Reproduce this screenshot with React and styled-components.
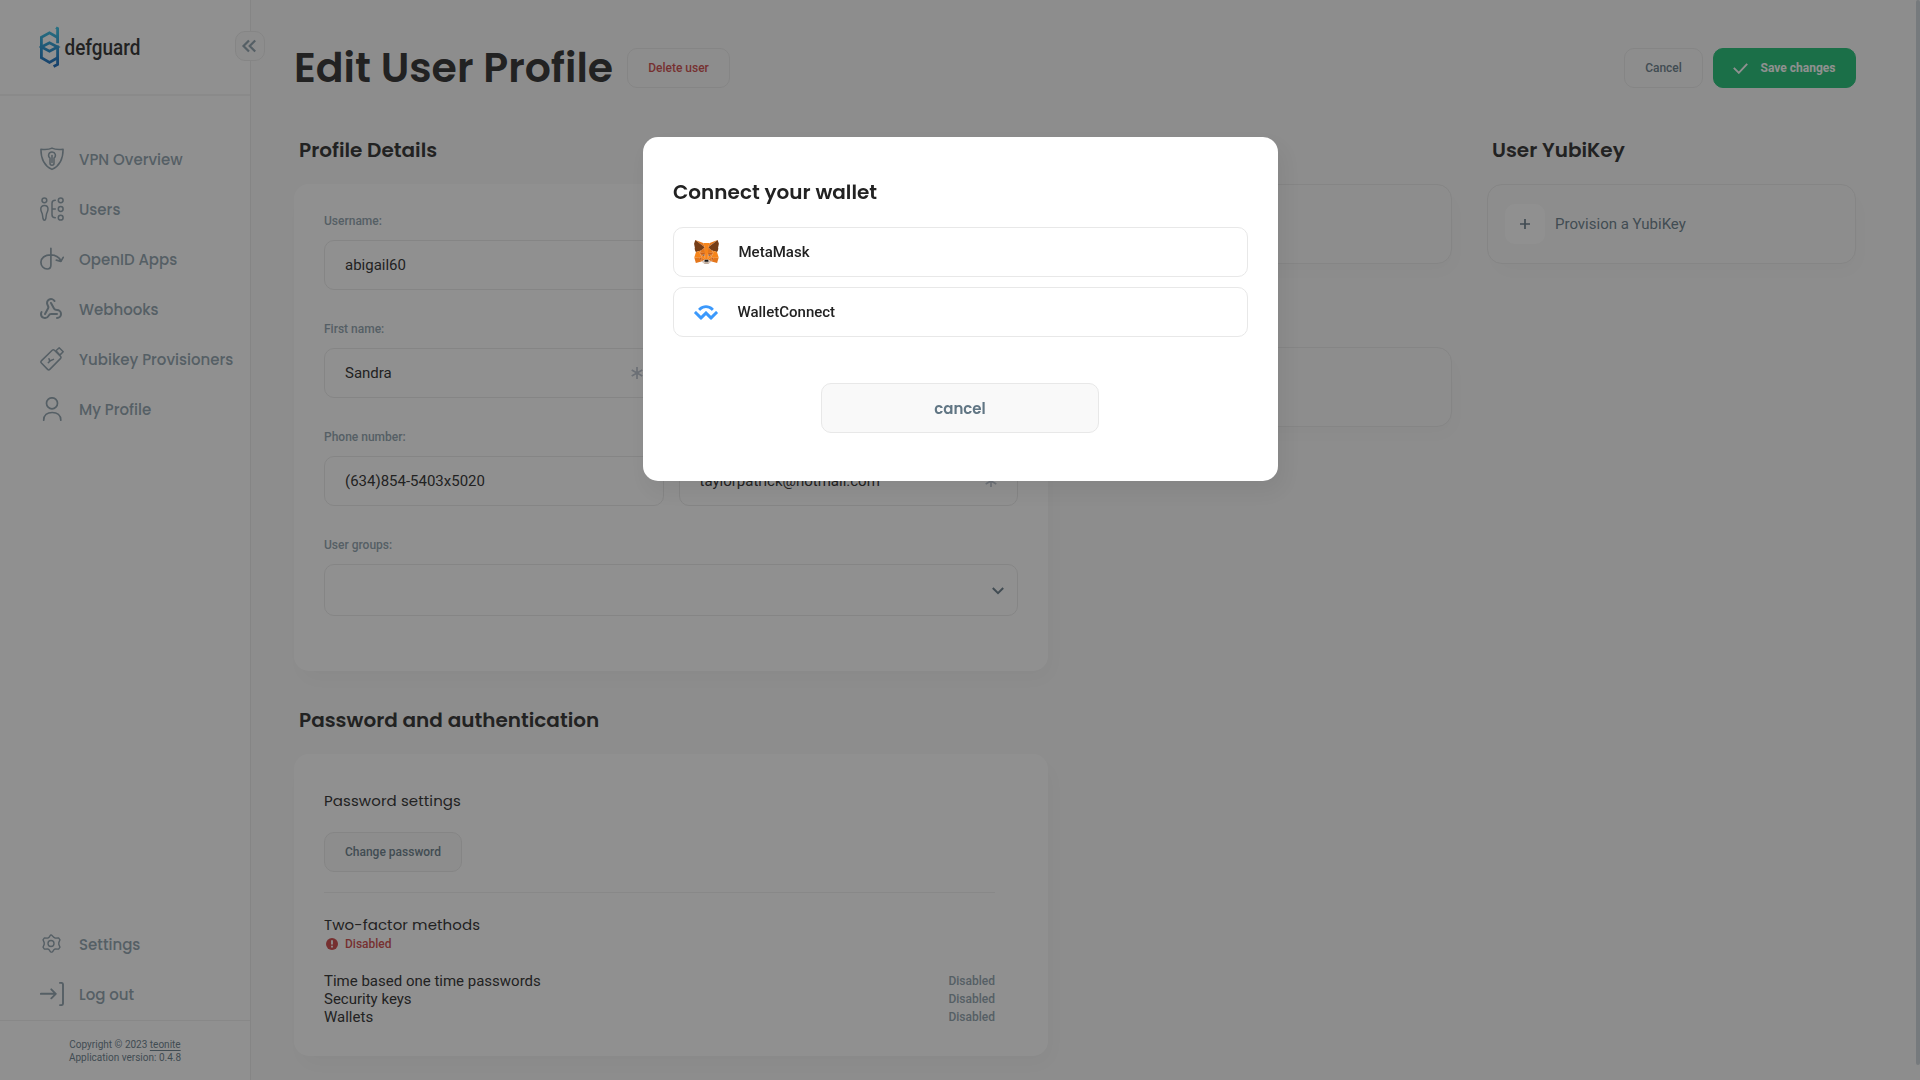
import React from 'react';
import styled, { createGlobalStyle, css } from 'styled-components';
import { Webhook } from 'lucide-react';

const heading = css`
  font-family: Poppins, Inter, sans-serif;
`;

const GlobalStyle = createGlobalStyle`
  *, *::before, *::after { box-sizing: border-box; }
  html, body, #root { margin: 0; padding: 0; }
  body {
    height: 1080px;
    overflow: hidden;
    background: #f9f9f9;
    color: #222;
    font-family: Roboto, sans-serif;
    font-size: 15px;
  }
  button { font-family: inherit; margin: 0; cursor: pointer; }
  svg { display: block; flex: none; }
`;

const Page = styled.div`
  display: flex;
  width: 1920px;
  height: 1080px;
  overflow: hidden;
`;

const Sidebar = styled.aside`
  display: flex;
  flex-direction: column;
  flex: none;
  width: 251px;
  height: 1080px;
  background: #fff;
  border-right: 1px solid #e8e8e8;
  position: relative;
`;

const Brand = styled.div`
  height: 96px;
  padding: 26px 0 0 39px;
  border-bottom: 2px solid #f2f2f2;
`;

const Collapse = styled.button`
  position: absolute;
  top: 31px;
  left: 235px;
  display: grid;
  place-items: center;
  width: 30px;
  height: 30px;
  padding: 0 2px 0 0;
  background: #f9f9f9;
  border: 1px solid #e8e8e8;
  border-radius: 10px;
`;

const Nav = styled.nav`
  display: flex;
  flex-direction: column;
  padding-top: ${(p) => p.$top || 0}px;
  padding-bottom: ${(p) => p.$bottom || 0}px;
`;

const Spacer = styled.div`
  flex: 1;
`;

const NavItem = styled.a`
  ${heading}
  display: flex;
  align-items: center;
  gap: 15px;
  height: 50px;
  padding-left: 40px;
  color: #899ca8;
  font-size: 15px;
  font-weight: 500;
  white-space: nowrap;
`;

const Footer = styled.footer`
  height: 60px;
  padding-top: 17px;
  border-top: 1px solid #efefef;
  text-align: center;
  font-size: 10px;
  line-height: 13px;
  color: #617684;
  a { text-decoration: underline; text-underline-offset: 2px; }
`;

const Main = styled.main`
  flex: 1;
  min-width: 0;
  padding: 40px 64px 0 43px;
`;

const TopBar = styled.header`
  display: flex;
  align-items: center;
  height: 56px;
`;

const Title = styled.h1`
  ${heading}
  margin: 0;
  width: 333px;
  font-size: 41px;
  font-weight: 600;
  line-height: 56px;
  white-space: nowrap;
`;

const Actions = styled.div`
  display: flex;
  gap: 10px;
  margin-left: auto;
`;

const Button = styled.button`
  display: flex;
  align-items: center;
  justify-content: center;
  gap: 13px;
  height: 40px;
  width: ${(p) => p.$width}px;
  padding: 0;
  font-size: 12px;
  font-weight: 500;
  border-radius: 10px;
  border: 1px solid #e8e8e8;
  background: #f9f9f9;
  color: #617684;
  ${(p) => p.$tone === 'danger' && css`color: #cb3f3f;`}
  ${(p) => p.$tone === 'success' && css`
    color: #fff;
    background: #14bc6e;
    border-color: #14bc6e;
    font-weight: 700;
    padding-right: 1px;
  `}
`;

const Columns = styled.div`
  display: grid;
  grid-template-columns: 754px 369px 369px;
  gap: 35px;
  margin-top: 40px;
`;

const Column = styled.div`
  display: flex;
  flex-direction: column;
`;

const SectionTitle = styled.h2`
  ${heading}
  height: 48px;
  margin: ${(p) => p.$top || 0}px 0 0 5px;
  line-height: 28px;
  font-size: 20px;
  font-weight: 600;
`;

const Card = styled.section`
  height: ${(p) => p.$height}px;
  padding: 30px;
  background: #fff;
  border-radius: 15px;
  box-shadow: 5px 10px 20px rgba(0, 0, 0, 0.03);
`;

const AddCard = styled.section`
  display: flex;
  align-items: center;
  gap: 10px;
  height: 80px;
  padding-left: 17px;
  color: #617684;
  background: #f9f9f9;
  border: 1px solid #e8e8e8;
  border-radius: 15px;
  box-shadow: 5px 10px 20px rgba(0, 0, 0, 0.025);
`;

const PlusBox = styled.span`
  display: grid;
  place-items: center;
  width: 40px;
  height: 40px;
  background: #fff;
  border-radius: 10px;
`;

const Form = styled.div`
  display: grid;
  grid-template-columns: 1fr 1fr;
  column-gap: 15px;
  row-gap: 32px;
`;

const Field = styled.div`
  grid-column: ${(p) => (p.$wide ? '1 / -1' : 'auto')};
`;

const Label = styled.label`
  display: block;
  height: 26px;
  line-height: 14px;
  font-size: 12px;
  font-weight: 500;
  color: #899ca8;
`;

const Input = styled.div`
  display: flex;
  align-items: center;
  justify-content: space-between;
  height: ${(p) => (p.$tall ? 52 : 50)}px;
  padding: ${(p) => (p.$tall ? '2px 13px 0 20px' : '0 20px')};
  border: 1px solid #e8e8e8;
  border-radius: 10px;
`;

const SubTitle = styled.h3`
  ${heading}
  margin: 0;
  font-size: 15px;
  font-weight: 400;
  line-height: 22px;
  letter-spacing: 0.09px;
`;

const PasswordBlock = styled.div`
  display: flex;
  flex-direction: column;
  gap: 20px;
  width: 671px;
  padding: 6px 0 20px;
  border-bottom: 1px solid #efefef;
`;

const FactorHead = styled.div`
  margin-top: 21px;
`;

const Status = styled.div`
  display: flex;
  align-items: center;
  gap: 7px;
  padding-left: 2px;
  height: 16px;
  font-size: 12px;
  font-weight: 500;
  color: #cb3f3f;
`;

const Methods = styled.div`
  width: 671px;
  margin-top: 20px;
`;

const Method = styled.div`
  display: flex;
  align-items: center;
  justify-content: space-between;
  height: 18px;
  line-height: 18px;
  span:last-child { font-size: 12px; font-weight: 500; color: #899ca8; }
`;

const ScrollThumb = styled.div`
  position: absolute;
  top: 0;
  left: 1916px;
  width: 4px;
  height: 1065px;
  border-radius: 2px;
  background: #cbd3d8;
`;

const Backdrop = styled.div`
  position: fixed;
  inset: 0;
  display: flex;
  justify-content: center;
  align-items: flex-start;
  padding-top: 137px;
  background: rgba(34, 34, 34, 0.5);
`;

const Modal = styled.div`
  display: flex;
  flex-direction: column;
  width: 635px;
  height: 344px;
  padding: 41px 30px 0;
  margin-left: 1px;
  background: #fff;
  border-radius: 15px;
  box-shadow: 5px 10px 20px rgba(0, 0, 0, 0.06);
`;

const ModalTitle = styled.h2`
  ${heading}
  margin: 0 0 21px;
  font-size: 20px;
  font-weight: 600;
  line-height: 28px;
`;

const WalletList = styled.div`
  display: flex;
  flex-direction: column;
  gap: 10px;
`;

const WalletOption = styled.button`
  display: flex;
  align-items: center;
  gap: 19.5px;
  height: 50px;
  padding: 0 20px;
  border: 1px solid #e8e8e8;
  border-radius: 10px;
  background: #fff;
  color: #222;
  font-size: 15px;
  font-weight: 500;
`;

const ModalCancel = styled.button`
  ${heading}
  width: 278px;
  height: 50px;
  margin: 46px 0 0 148px;
  border: 1px solid #e8e8e8;
  border-radius: 10px;
  background: #f9f9f9;
  color: #617684;
  font-size: 15px;
  font-weight: 600;
`;

const Icon = ({ children, w = 1.5 }) => (
  <svg width="24" height="24" viewBox="0 0 24 24" fill="none" stroke="currentColor" strokeWidth={w} strokeLinecap="round" strokeLinejoin="round">
    {children}
  </svg>
);

const ShieldIcon = () => (
  <Icon>
    <path d="M12 1.1C9.2 2.5 5 2.7 .9 2.2c0 8.800 3.600 16.800 11.100 20.200C19.500 19 23.100 11 23.100 2.200 19 2.700 14.800 2.500 12 1.100z" />
    <path d="M12 5a3.300 3.300 0 0 0-2 6v5.300a2 2 0 0 0 4 0V11a3.300 3.300 0 0 0-2-6z" />
    <path d="M12 8.500v7" />
  </Icon>
);

const UsersIcon = () => (
  <Icon>
    <circle cx="4.400" cy="3.300" r="2.400" />
    <path d="M4.400 8.400C2 8.400.8 10 .8 12c0 2.200 1 3.400 1.500 5l.7 4.500c.2 1 .6 1.700 1.400 1.700s1.200-.7 1.400-1.700l.7-4.500C7 15.400 8 14.200 8 12c0-2-1.200-3.600-3.600-3.600z" />
    <path d="M15.300 3.300c-2.400 0-3.300.9-3.300 3v11.400c0 2.100.9 3 3.300 3M12 12h3.300" />
    <circle cx="20.700" cy="3.300" r="2.400" />
    <circle cx="20.700" cy="12" r="2.400" />
    <circle cx="20.700" cy="20.700" r="2.400" />
  </Icon>
);

const OpenIdIcon = () => (
  <Icon w={1.7}>
    <path d="M10.900 1.300V18c0 2.600-1.400 4-3.700 4C3.600 22 .9 19 .9 15.300c0-4.300 3.900-7.400 9.600-7.400 4.700 0 8.700 2.400 10.300 6" />
    <path d="M16.300 13.200l4.600 1.100 2.300-4" />
  </Icon>
);

const WebhookIcon = () => (
  <svg width="24" height="24" viewBox="0 0 24 24">
    <Webhook x="-1" y="0" width="24" height="24" strokeWidth={2} />
  </svg>
);

const YubikeyIcon = () => (
  <Icon>
    <path d="M1.300 13.900L12.200 3.300c.7-.7 1.500-.7 2.200 0l6 5.900c.8.800.8 1.600 0 2.400L9.800 22.400c-.7.700-1.500.700-2.200 0L1.400 16c-.7-.7-.7-1.400-.1-2.100z" />
    <path d="M16 3.800l3.200-3 4 3.900-3.400 3.400z" />
    <path d="M9 11.700l.7 2.300 3.800-1.600M8.300 15.600l1.900-1.600" />
  </Icon>
);

const ProfileIcon = () => (
  <Icon w={1.700}>
    <circle cx="12" cy="6.300" r="5.500" />
    <path d="M3.700 23.200c0-5 3.600-7.700 8.500-7.700s8.600 2.700 8.600 7.700" />
  </Icon>
);

const GearIcon = () => (
  <Icon w={1.400}>
    <path d="M11 3.100l-1.500 2.300-1.300.7-3.300-.2L3.500 7.800l1.200 2.800v1.800l-1.200 2.800 1.400 1.900 3.300-.2 1.300.7 1.500 2.300 1 .3 1-.3 1.500-2.300 1.300-.7 3.300.2 1.400-1.900-1.200-2.800v-1.800l1.200-2.800-1.400-1.900-3.300.2-1.300-.7L12 3.100 11.500 2.900z" transform="translate(-.5 0)" />
    <circle cx="11" cy="11.500" r="3" />
  </Icon>
);

const LogoutIcon = () => (
  <Icon w={1.900}>
    <path d="M.8 11.800h14.800M11.300 7.300l4.500 4.500-4.500 4.500M20 .9h1.300c1 0 1.700.6 1.700 1.700v18.800c0 1.100-.7 1.700-1.700 1.700H20" />
  </Icon>
);

const Asterisk = () => (
  <svg width="12" height="12" viewBox="0 0 12 12" stroke="#b8c0cc" strokeWidth="1.700">
    <path d="M6 0v12M.7 3l10.600 6M11.300 3L.7 9" />
  </svg>
);

const Plus = () => (
  <svg width="10" height="10" viewBox="0 0 10 10" stroke="#617684" strokeWidth="1.700">
    <path d="M5 0v10M0 5h10" />
  </svg>
);

const Logo = () => (
  <svg width="140" height="46" viewBox="0 0 140 46">
    <defs>
      <linearGradient id="mark" x1="0" y1="0" x2="0" y2="41" gradientUnits="userSpaceOnUse">
        <stop offset="0" stopColor="#2fc4e6" />
        <stop offset="1" stopColor="#0a5cb4" />
      </linearGradient>
    </defs>
    <g fill="none" stroke="url(#mark)" strokeWidth="2.800" strokeLinejoin="miter">
      <path d="M17 1.600L18.600 2.600V17.200" />
      <path d="M18.600 11.500L10.500 6.800 2.400 11.400V31.800L10.500 36.400 18.600 31.800" />
      <path d="M18.600 19.500V38.500L14.600 40.600" />
      <path d="M2.400 21L10.500 16.800 18.600 21 10.500 25.200z" />
    </g>
    <text x="25.500" y="28.500" fill="#222" fontFamily="Roboto, sans-serif" fontSize="22.500" fontWeight="500" textLength="76" lengthAdjust="spacingAndGlyphs">
      defguard
    </text>
  </svg>
);

const foxShapes = [
  ['#e2761b', '274.1,35.5 174.6,109.4 193,65.8'],
  ['#e4761b', '44.4,35.5 143.1,110.1 125.6,65.8'],
  ['#e4761b', '238.3,206.8 211.8,247.4 268.5,263 284.8,207.7'],
  ['#e4761b', '33.9,207.7 50.1,263 106.8,247.4 80.3,206.8'],
  ['#e4761b', '103.6,138.2 87.8,162.1 144.1,164.6 142.1,104.1'],
  ['#e4761b', '214.9,138.2 175.9,103.4 174.6,164.6 230.8,162.1'],
  ['#e4761b', '106.8,247.4 140.6,230.9 111.4,208.1'],
  ['#e4761b', '177.9,230.9 211.8,247.4 207.1,208.1'],
  ['#d7c1b3', '211.8,247.4 177.9,230.9 180.6,253 180.3,262.3'],
  ['#d7c1b3', '106.8,247.4 138.3,262.3 138.1,253 140.6,230.9'],
  ['#233447', '138.8,193.5 110.6,185.2 130.5,176.1'],
  ['#233447', '179.7,193.5 188,176.1 208,185.2'],
  ['#cd6116', '106.8,247.4 111.6,206.8 80.3,207.7'],
  ['#cd6116', '207,206.8 211.8,247.4 238.3,207.7'],
  ['#cd6116', '230.8,162.1 174.6,164.6 179.8,193.5 188.1,176.1 208.1,185.2'],
  ['#cd6116', '110.6,185.2 130.6,176.1 138.8,193.5 144.1,164.6 87.8,162.1'],
  ['#e4751f', '87.8,162.1 111.4,208.1 110.6,185.2'],
  ['#e4751f', '208.1,185.2 207.1,208.1 230.8,162.1'],
  ['#e4751f', '144.1,164.6 138.8,193.5 145.4,227.6 146.9,182.7'],
  ['#e4751f', '174.6,164.6 171.9,182.6 173.1,227.6 179.8,193.5'],
  ['#f6851b', '179.8,193.5 173.1,227.6 177.9,230.9 207.1,208.1 208.1,185.2'],
  ['#f6851b', '110.6,185.2 111.4,208.1 140.6,230.9 145.4,227.6 138.8,193.5'],
  ['#c0ad9e', '180.3,262.3 180.6,253 178.1,250.8 140.4,250.8 138.1,253 138.3,262.3 106.8,247.4 117.8,256.4 140.1,271.9 178.4,271.9 200.8,256.4 211.8,247.4'],
  ['#161616', '177.9,230.9 173.1,227.6 145.4,227.6 140.6,230.9 138.1,253 140.4,250.8 178.1,250.8 180.6,253'],
  ['#763d16', '278.3,114.2 286.8,73.4 274.1,35.5 177.9,106.9 214.9,138.2 267.2,153.5 278.8,140 273.8,136.4 281.8,129.1 275.6,124.3 283.6,118.2'],
  ['#763d16', '31.8,73.4 40.3,114.2 34.9,118.2 42.9,124.3 36.8,129.1 44.8,136.4 39.8,140 51.3,153.5 103.6,138.2 140.6,106.9 44.4,35.5'],
  ['#f6851b', '267.2,153.5 214.9,138.2 230.8,162.1 207.1,208.1 238.3,207.7 284.8,207.7'],
  ['#f6851b', '103.6,138.2 51.3,153.5 33.9,207.7 80.3,207.7 111.4,208.1 87.8,162.1'],
  ['#f6851b', '174.6,164.6 177.9,106.9 193.1,65.8 125.6,65.8 140.6,106.9 144.1,164.6 145.3,182.8 145.4,227.6 173.1,227.6 173.3,182.8'],
];

const MetaMaskIcon = () => (
  <svg width="25" height="24" viewBox="31 35 257 238" preserveAspectRatio="none">
    {foxShapes.map(([fill, points]) => (
      <polygon key={points} fill={fill} points={points} />
    ))}
  </svg>
);

const WalletConnectIcon = () => (
  <svg width="24" height="15" viewBox="0 0 300 185">
    <path
      fill="#3b99fc"
      d="M61.4385429,36.2562612 C110.349767,-11.6319051 189.65053,-11.6319051 238.561752,36.2562612 L244.448297,42.0196786 C246.893858,44.4140867 246.893858,48.2961898 244.448297,50.690599 L224.311602,70.406102 C223.088821,71.6033071 221.106302,71.6033071 219.883521,70.406102 L211.782937,62.4749541 C177.661245,29.0669724 122.339051,29.0669724 88.2173582,62.4749541 L79.542302,70.9685592 C78.3195204,72.1657633 76.337001,72.1657633 75.1142214,70.9685592 L54.9775265,51.2530561 C52.5319653,48.8586469 52.5319653,44.9765439 54.9775265,42.5821357 L61.4385429,36.2562612 Z M280.206339,77.0300061 L298.128036,94.5769031 C300.573585,96.9713 300.573599,100.85338 298.128067,103.247793 L217.317896,182.368927 C214.872352,184.763353 210.907314,184.76338 208.461736,182.368989 L151.107561,126.214385 C150.496171,125.615783 149.504911,125.615783 148.893521,126.214385 L91.5405888,182.368927 C89.0950587,184.763359 85.1300133,184.763399 82.6844276,182.369014 L1.87196327,103.246785 C-0.573596939,100.852377 -0.573596939,96.9702735 1.87196327,94.5758653 L19.7936929,77.028998 C22.2392531,74.6345898 26.2042918,74.6345898 28.6498531,77.028998 L86.0048306,133.184355 C86.6162214,133.782957 87.6074796,133.782957 88.2188704,133.184355 L145.571,77.028998 C148.016505,74.6345347 151.981544,74.6344449 154.427161,77.028798 L211.782164,133.184331 C212.393554,133.782932 213.384814,133.782932 213.996204,133.184331 L271.349179,77.0308961 C273.79474,74.6364878 277.759778,74.6364878 280.205339,77.0308961 Z"
    />
  </svg>
);

const navItems = [
  ['VPN Overview', <ShieldIcon />],
  ['Users', <UsersIcon />],
  ['OpenID Apps', <OpenIdIcon />],
  ['Webhooks', <WebhookIcon />],
  ['Yubikey Provisioners', <YubikeyIcon />],
  ['My Profile', <ProfileIcon />],
];

export default function App() {
  return (
    <>
      <GlobalStyle />
      <Page>
        <Sidebar>
          <Brand>
            <Logo />
          </Brand>
          <Collapse aria-label="Collapse">
            <svg width="16" height="14" viewBox="0 0 16 14" fill="none" stroke="#899ca8" strokeWidth="2.200">
              <path d="M8 1.500L2.500 7 8 12.500M14.200 1.500L8.700 7l5.500 5.500" />
            </svg>
          </Collapse>
          <Nav $top={38}>
            {navItems.map(([label, icon]) => (
              <NavItem key={label}>
                {icon}
                {label}
              </NavItem>
            ))}
          </Nav>
          <Spacer />
          <Nav $bottom={1}>
            <NavItem><GearIcon />Settings</NavItem>
            <NavItem><LogoutIcon />Log out</NavItem>
          </Nav>
          <Footer>
            <div>Copyright © 2023 <a>teonite</a></div>
            <div>Application version: 0.4.8</div>
          </Footer>
        </Sidebar>

        <Main>
          <TopBar>
            <Title>Edit User Profile</Title>
            <Button $width={103} $tone="danger">Delete user</Button>
            <Actions>
              <Button $width={79}>Cancel</Button>
              <Button $width={143} $tone="success">
                <svg width="15" height="11" viewBox="0 0 15 11" fill="none" stroke="#fff" strokeWidth="1.900">
                  <path d="M.8 4.800l5 5L14.200.8" />
                </svg>
                Save changes
              </Button>
            </Actions>
          </TopBar>

          <Columns>
            <Column>
              <SectionTitle>Profile Details</SectionTitle>
              <Card $height={487}>
                <Form>
                  <Field $wide>
                    <Label>Username:</Label>
                    <Input>abigail60</Input>
                  </Field>
                  <Field>
                    <Label>First name:</Label>
                    <Input>Sandra<Asterisk /></Input>
                  </Field>
                  <Field>
                    <Label>Last name:</Label>
                    <Input><span /><Asterisk /></Input>
                  </Field>
                  <Field>
                    <Label>Phone number:</Label>
                    <Input>(634)854-5403x5020</Input>
                  </Field>
                  <Field>
                    <Label>User email:</Label>
                    <Input>taylorpatrick@hotmail.com<Asterisk /></Input>
                  </Field>
                  <Field $wide>
                    <Label>User groups:</Label>
                    <Input $tall>
                      <span />
                      <svg width="12" height="8" viewBox="0 0 12 8" fill="none" stroke="#617684" strokeWidth="2">
                        <path d="M.8 1L6 6.200 11.200 1" />
                      </svg>
                    </Input>
                  </Field>
                </Form>
              </Card>

              <SectionTitle $top={35}>Password and authentication</SectionTitle>
              <Card $height={302}>
                <PasswordBlock>
                  <SubTitle>Password settings</SubTitle>
                  <Button $width={138}>Change password</Button>
                </PasswordBlock>
                <FactorHead>
                  <SubTitle>Two-factor methods</SubTitle>
                  <Status>
                    <svg width="12" height="12" viewBox="0 0 12 12">
                      <circle cx="6" cy="6" r="6" fill="#cb3f3f" />
                      <path d="M5.100 2.300h1.800v4.200H5.100zM5.100 7.700h1.800v1.800H5.100z" fill="#fff" />
                    </svg>
                    Disabled
                  </Status>
                </FactorHead>
                <Methods>
                  {['Time based one time passwords', 'Security keys', 'Wallets'].map((name) => (
                    <Method key={name}>
                      <span>{name}</span>
                      <span>Disabled</span>
                    </Method>
                  ))}
                </Methods>
              </Card>
            </Column>

            <Column>
              <SectionTitle>User devices</SectionTitle>
              <AddCard />
              <SectionTitle $top={35}>User wallets</SectionTitle>
              <AddCard />
            </Column>

            <Column>
              <SectionTitle>User YubiKey</SectionTitle>
              <AddCard>
                <PlusBox><Plus /></PlusBox>
                Provision a YubiKey
              </AddCard>
            </Column>
          </Columns>
        </Main>
      </Page>
      <ScrollThumb />
      <Backdrop>
        <Modal>
          <ModalTitle>Connect your wallet</ModalTitle>
          <WalletList>
            <WalletOption><MetaMaskIcon />MetaMask</WalletOption>
            <WalletOption><WalletConnectIcon />WalletConnect</WalletOption>
          </WalletList>
          <ModalCancel>cancel</ModalCancel>
        </Modal>
      </Backdrop>
    </>
  );
}
